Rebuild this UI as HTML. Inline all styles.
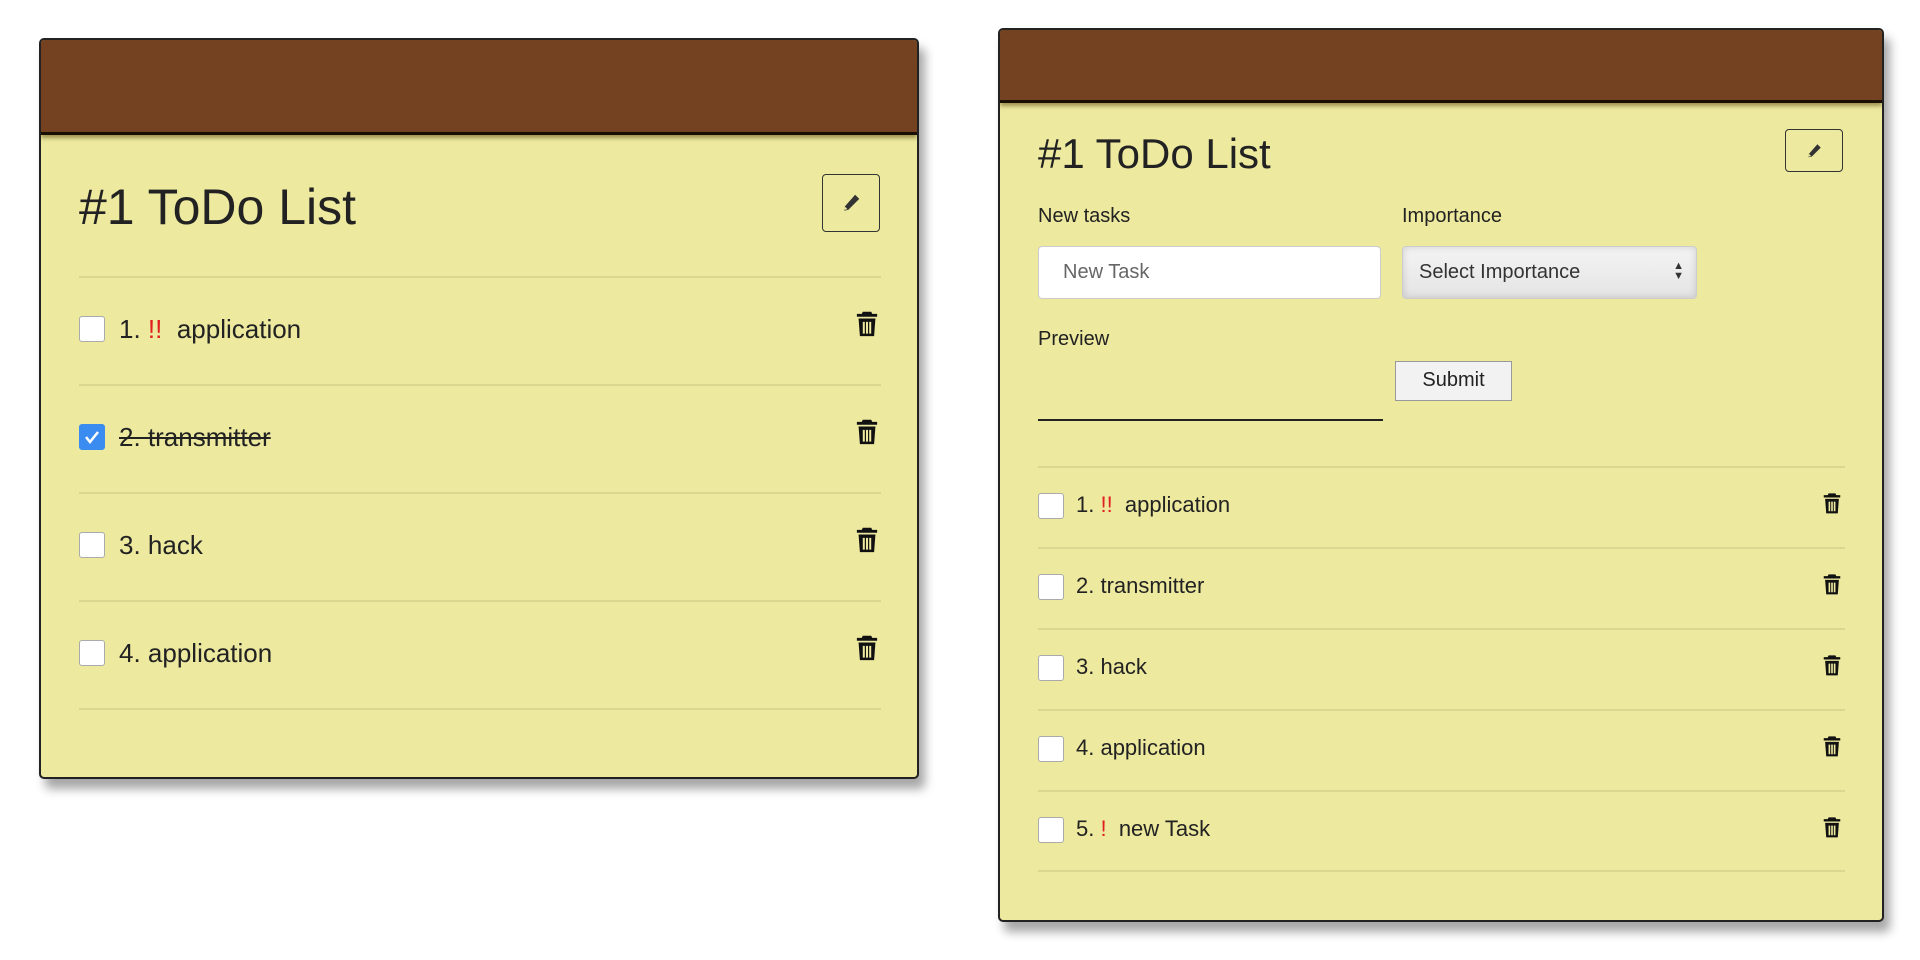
<!DOCTYPE html>
<html><head><meta charset="utf-8"><style>
body{margin:0;width:1920px;height:960px;background:#fff;position:relative;overflow:hidden;font-family:"Liberation Sans",sans-serif;color:#222}
.card{position:absolute;background:#ede99f;border:2px solid #222;border-radius:5px;box-shadow:6px 10px 10px rgba(0,0,0,.35);overflow:hidden;box-sizing:border-box}
.hd{position:absolute;left:0;top:0;right:0;background:#744220;border-bottom:3px solid #1a0f05;box-shadow:0 3px 4px rgba(80,60,0,.5)}
.a{position:absolute}
.line{position:absolute;height:2px;background:#dcd790}
.cb{position:absolute;background:#fff;border:1px solid #aaa;border-radius:3px;box-sizing:border-box}
.btn{position:absolute;border:1.5px solid #333;border-radius:4px;box-sizing:border-box;display:flex;align-items:center;justify-content:center}
</style></head><body>
<svg width="0" height="0" style="position:absolute"><defs>
<symbol id="tr" viewBox="0 0 14 16"><path d="M4.5 1h5l.6 1.3H13v1.7H1V2.3h2.9z" fill="#111"/><path d="M2 5h10l-.8 10.5H2.8zM4.5 7v7h1.2V7zM6.4 7v7h1.2V7zM8.3 7v7h1.2V7z" fill="#111" fill-rule="evenodd"/></symbol>
<symbol id="pe" viewBox="0 0 16 16"><path d="M11 2l3 3-8 8-3 .5.5-3z" fill="#333"/><path d="M3.5 10.5l2 2-2.5.5z" fill="#ede99f"/></symbol>
</defs></svg>

<div class="card" style="left:39px;top:38px;width:880px;height:741px">
<div class="hd" style="height:92px"></div>
<div class="a" style="left:38px;top:138px;font-size:50px">#1 ToDo List</div>
<div class="btn" style="left:781px;top:134px;width:58px;height:58px"><svg width="22" height="22"><use href="#pe"/></svg></div>
<div class="line" style="left:38px;top:236px;width:802px"></div>
<div class="line" style="left:38px;top:344px;width:802px"></div>
<div class="line" style="left:38px;top:452px;width:802px"></div>
<div class="line" style="left:38px;top:560px;width:802px"></div>
<div class="line" style="left:38px;top:668px;width:802px"></div>
<div class="cb" style="left:38px;top:276px;width:26px;height:26px"></div>
<div class="a" style="left:78px;top:274px;font-size:26px">1. <span style="color:#e02020">!!</span> &nbsp;application</div>
<div class="cb" style="left:38px;top:384px;width:26px;height:26px;background:#3b8cf0;border-color:#3b8cf0"><svg width="24" height="24"><path d="M6 12l4 5 8-10" stroke="#fff" stroke-width="2.5" fill="none"/></svg></div>
<div class="a" style="left:78px;top:382px;font-size:26px;text-decoration:line-through">2. transmitter</div>
<div class="cb" style="left:38px;top:492px;width:26px;height:26px"></div>
<div class="a" style="left:78px;top:490px;font-size:26px">3. hack</div>
<div class="cb" style="left:38px;top:600px;width:26px;height:26px"></div>
<div class="a" style="left:78px;top:598px;font-size:26px">4. application</div>
<svg class="a" style="left:814px;top:270px" width="24" height="27"><use href="#tr"/></svg>
<svg class="a" style="left:814px;top:378px" width="24" height="27"><use href="#tr"/></svg>
<svg class="a" style="left:814px;top:486px" width="24" height="27"><use href="#tr"/></svg>
<svg class="a" style="left:814px;top:594px" width="24" height="27"><use href="#tr"/></svg>
</div>

<div class="card" style="left:998px;top:28px;width:886px;height:894px">
<div class="hd" style="height:70px"></div>
<div class="a" style="left:38px;top:100px;font-size:42px">#1 ToDo List</div>
<div class="btn" style="left:785px;top:99px;width:58px;height:43px"><svg width="18" height="18"><use href="#pe"/></svg></div>
<div class="a" style="left:38px;top:175px;font-size:20px">New tasks</div>
<div class="a" style="left:402px;top:175px;font-size:20px">Importance</div>
<div class="a" style="left:38px;top:216px;width:343px;height:53px;background:#fff;border:1px solid #ccc;border-radius:4px;box-sizing:border-box;padding:14px 24px;font-size:20px;color:#666">New Task</div>
<div class="a" style="left:402px;top:216px;width:295px;height:53px;background:linear-gradient(#f4f4f4,#e4e4e4);border:1px solid #ccc;border-radius:4px;box-sizing:border-box;padding:14px 16px;font-size:20px;color:#333;box-shadow:inset 0 0 8px rgba(0,0,0,.15)">Select Importance<span style="position:absolute;right:12px;top:14px;font-size:11px;line-height:10px">▲<br>▼</span></div>
<div class="a" style="left:38px;top:298px;font-size:20px">Preview</div>
<div class="a" style="left:38px;top:389px;width:345px;height:2px;background:#222"></div>
<div class="a" style="left:395px;top:331px;width:117px;height:40px;background:#f2f2f2;border:1px solid #999;box-sizing:border-box;font-size:20px;text-align:center;line-height:36px">Submit</div>
<div class="line" style="left:38px;top:436px;width:807px"></div>
<div class="line" style="left:38px;top:517px;width:807px"></div>
<div class="line" style="left:38px;top:598px;width:807px"></div>
<div class="line" style="left:38px;top:679px;width:807px"></div>
<div class="line" style="left:38px;top:760px;width:807px"></div>
<div class="line" style="left:38px;top:840px;width:807px"></div>
<div class="cb" style="left:38px;top:463px;width:26px;height:26px"></div>
<div class="a" style="left:76px;top:462px;font-size:22px">1. <span style="color:#e02020">!!</span> &nbsp;application</div>
<div class="cb" style="left:38px;top:544px;width:26px;height:26px"></div>
<div class="a" style="left:76px;top:543px;font-size:22px">2. transmitter</div>
<div class="cb" style="left:38px;top:625px;width:26px;height:26px"></div>
<div class="a" style="left:76px;top:624px;font-size:22px">3. hack</div>
<div class="cb" style="left:38px;top:706px;width:26px;height:26px"></div>
<div class="a" style="left:76px;top:705px;font-size:22px">4. application</div>
<div class="cb" style="left:38px;top:787px;width:26px;height:26px"></div>
<div class="a" style="left:76px;top:786px;font-size:22px">5. <span style="color:#e02020">!</span> &nbsp;new Task</div>
<svg class="a" style="left:822px;top:462px" width="20" height="22"><use href="#tr"/></svg>
<svg class="a" style="left:822px;top:543px" width="20" height="22"><use href="#tr"/></svg>
<svg class="a" style="left:822px;top:624px" width="20" height="22"><use href="#tr"/></svg>
<svg class="a" style="left:822px;top:705px" width="20" height="22"><use href="#tr"/></svg>
<svg class="a" style="left:822px;top:786px" width="20" height="22"><use href="#tr"/></svg>
</div>
</body></html>
